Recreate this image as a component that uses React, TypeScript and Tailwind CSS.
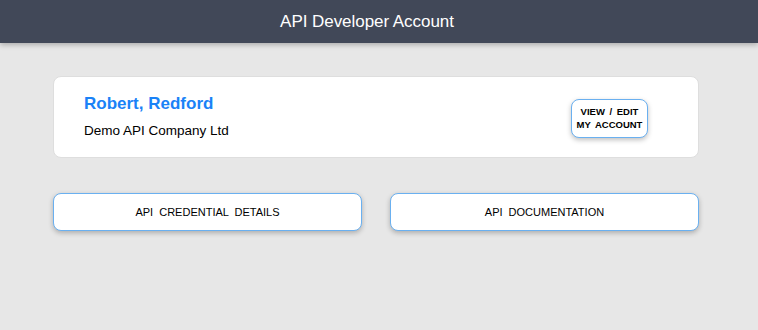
export default function App() {
  return (
    <div className="min-h-[330px] bg-[#e7e7e7] font-['Liberation_Sans',Arial,sans-serif]">
      {/* Header */}
      <header className="h-[43px] bg-[#414858] flex items-center justify-center pr-[24px] shadow-[0_2px_5px_rgba(0,0,0,0.25)]">
        <h1 className="text-[17px] text-white tracking-[-0.05px]">API Developer Account</h1>
      </header>

      <main className="ml-[53px] w-[646px] pt-[33px]">
        {/* Account card */}
        <div className="h-[82px] bg-white rounded-lg border border-[#dedede] flex items-center justify-between pl-[30px] pr-[50px]">
          <div className="flex flex-col">
            <div className="text-[17px] font-bold text-[#1a82f7] leading-5">Robert, Redford</div>
            <div className="text-[13.5px] text-black mt-[7px] leading-5">Demo API Company Ltd</div>
          </div>
          <button className="w-[77px] h-[39px] mt-[2px] bg-white rounded-lg border border-[#6ab0f0] shadow-[0_2px_5px_rgba(0,0,0,0.25)] text-[9.5px] font-bold text-black leading-[13px] [word-spacing:2px]">
            VIEW / EDIT
            <br />
            MY ACCOUNT
          </button>
        </div>

        {/* Actions */}
        <div className="grid grid-cols-2 gap-[28px] mt-[35px]">
          <button className="h-[38px] bg-white rounded-lg border border-[#6ab0f0] shadow-[0_2px_5px_rgba(0,0,0,0.25)] text-[11px] text-black [word-spacing:3px]">
            API CREDENTIAL DETAILS
          </button>
          <button className="h-[38px] bg-white rounded-lg border border-[#6ab0f0] shadow-[0_2px_5px_rgba(0,0,0,0.25)] text-[11px] text-black [word-spacing:3px]">
            API DOCUMENTATION
          </button>
        </div>
      </main>
    </div>
  );
}
